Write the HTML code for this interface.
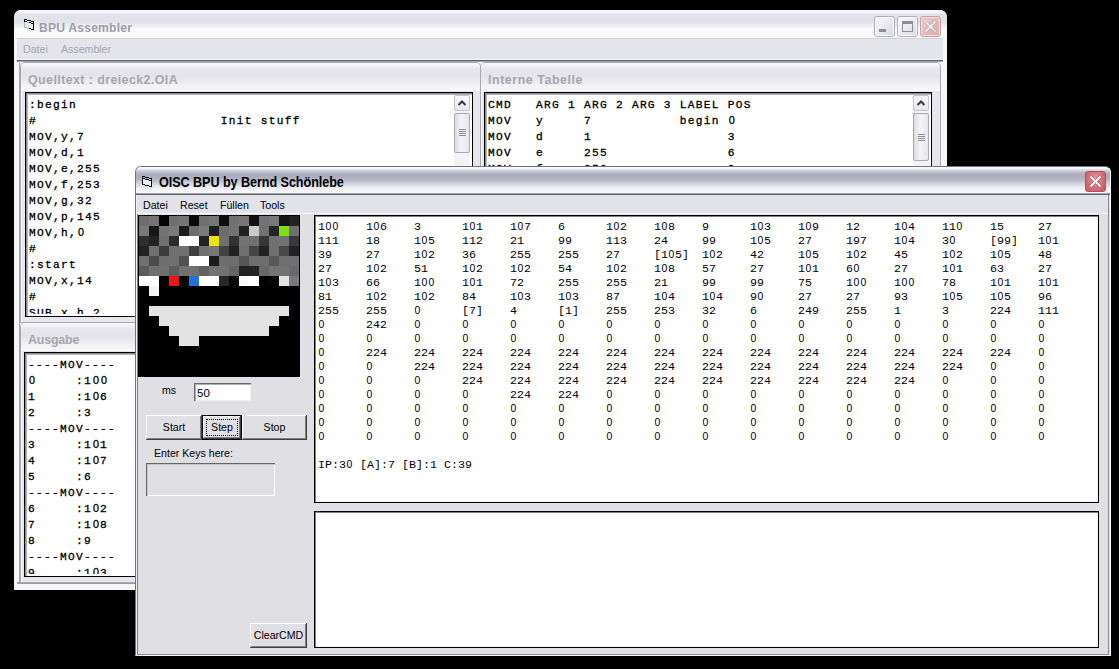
<!DOCTYPE html>
<html><head><meta charset="utf-8"><style>
html,body{margin:0;padding:0}
body{width:1119px;height:669px;background:#000;overflow:hidden;position:relative;font-family:"Liberation Sans",sans-serif}
.a{position:absolute}
.ttl{font-weight:bold;font-size:13.5px;white-space:nowrap;line-height:16px}
.menu{font-size:10.6px;white-space:nowrap;line-height:13px}
.xpbtn{box-sizing:border-box;width:21px;height:21px;border:1px solid #acacb6;border-radius:3px;box-shadow:inset 0 0 0 1px #fbfbfd;background:linear-gradient(135deg,#fafafc,#e8e8ee 55%,#d8d8e0)}
.child{box-sizing:border-box;background:#e6e6ec;border-radius:5px 5px 0 0;overflow:hidden;border:1px solid #a8a8b0;box-shadow:inset 1px 0 0 #fafafc}
.ctitle{left:0;top:0;right:0;height:28px;background:linear-gradient(#fcfcfd 0px,#f4f4f7 2px,#e6e6ec 6px,#e3e3ea 12px,#e8e8ee 17px,#f2f2f5 22px,#f8f8fa 27px)}
.ctext{font-weight:bold;font-size:13.5px;color:#a6a6ad;white-space:nowrap;line-height:16px}
.tb{box-sizing:border-box;background:#fff;border:1px solid #000;box-shadow:inset 1px 1px 0 #8c8c8c,inset 2px 2px 0 #b4b4b4;overflow:hidden}
.src{font-family:"Liberation Mono",monospace;font-size:11.2px;letter-spacing:1.28px;line-height:16px;white-space:pre;color:#000;-webkit-text-stroke:0.3px #000}
.sbb{box-sizing:border-box;border:1px solid #c2c2ca;border-radius:2px;background:linear-gradient(#fafafc,#e6e6ec)}
.sbt{box-sizing:border-box;border:1px solid #a9a9b1;border-radius:2px;background:linear-gradient(90deg,#dcdce2,#f4f4f8 45%,#e6e6ec)}
.grip{left:4px;width:7px;height:1px;background:#8c8c94}
.track{background:#f3f3f5}
#grid i{position:absolute;width:10px;height:10px;display:block}
.btn{box-sizing:border-box;background:#e0dfe3;box-shadow:inset -1px -1px 0 #404040,inset 1px 1px 0 #fff,inset -2px -2px 0 #808080;font-size:10.6px;text-align:center;color:#000}
.ctl{font-size:10.6px;white-space:nowrap;color:#000;line-height:13px}
.mr{position:absolute;left:0;height:14px;width:780px}
.mr b{position:absolute;top:0;font-weight:normal}
#memt{font-family:"Liberation Mono",monospace;font-size:11.67px;line-height:14px;white-space:pre;color:#000;}
#memt u{text-decoration:none;display:inline-block;width:7px;line-height:0;text-align:center;font-family:"Liberation Sans",sans-serif;font-size:10.4px}
.src u{text-decoration:none;display:inline-block;width:8px;line-height:0;letter-spacing:0;text-align:center;font-family:"Liberation Sans",sans-serif;font-size:10.8px}

</style></head><body>
<!-- BACK WINDOW -->
<div class="a" style="left:14px;top:10px;width:933px;height:580px;background:#f6f6f8;border-radius:7px 7px 0 0"></div>
<div class="a" style="left:14px;top:10px;width:933px;height:28px;border-radius:7px 7px 0 0;background:linear-gradient(#f8f8fa 0px,#f5f5f8 3px,#e2e2ea 4px,#e2e2eb 13px,#ececf0 14px,#eeeef2 17px,#f9f9fb 18px,#fafafb 28px)"></div>
<svg class="a" style="left:24px;top:19px" width="10" height="11" shape-rendering="crispEdges"><rect x="1" y="3" width="8" height="7" fill="#e4eeea"/><rect x="3" y="9" width="5" height="1" fill="#e4eeea"/><rect x="0" y="0" width="1" height="1" fill="#111"/><rect x="1" y="0" width="1" height="1" fill="#111"/><rect x="2" y="0" width="1" height="1" fill="#111"/><rect x="0" y="1" width="1" height="1" fill="#111"/><rect x="3" y="1" width="1" height="1" fill="#111"/><rect x="4" y="1" width="1" height="1" fill="#111"/><rect x="5" y="1" width="1" height="1" fill="#111"/><rect x="6" y="1" width="1" height="1" fill="#111"/><rect x="0" y="2" width="1" height="1" fill="#111"/><rect x="1" y="2" width="1" height="1" fill="#111"/><rect x="2" y="2" width="1" height="1" fill="#111"/><rect x="7" y="2" width="1" height="1" fill="#111"/><rect x="8" y="2" width="1" height="1" fill="#111"/><rect x="9" y="2" width="1" height="1" fill="#111"/><rect x="0" y="3" width="1" height="1" fill="#b4b4ba"/><rect x="3" y="3" width="1" height="1" fill="#b4b4ba"/><rect x="4" y="3" width="1" height="1" fill="#b4b4ba"/><rect x="5" y="3" width="1" height="1" fill="#111"/><rect x="6" y="3" width="1" height="1" fill="#111"/><rect x="9" y="3" width="1" height="1" fill="#111"/><rect x="0" y="4" width="1" height="1" fill="#b4b4ba"/><rect x="7" y="4" width="1" height="1" fill="#111"/><rect x="8" y="4" width="1" height="1" fill="#111"/><rect x="9" y="4" width="1" height="1" fill="#111"/><rect x="0" y="5" width="1" height="1" fill="#b4b4ba"/><rect x="9" y="5" width="1" height="1" fill="#111"/><rect x="0" y="6" width="1" height="1" fill="#b4b4ba"/><rect x="9" y="6" width="1" height="1" fill="#111"/><rect x="0" y="7" width="1" height="1" fill="#b4b4ba"/><rect x="9" y="7" width="1" height="1" fill="#111"/><rect x="0" y="8" width="1" height="1" fill="#b4b4ba"/><rect x="1" y="8" width="1" height="1" fill="#b4b4ba"/><rect x="2" y="8" width="1" height="1" fill="#b4b4ba"/><rect x="9" y="8" width="1" height="1" fill="#111"/><rect x="3" y="9" width="1" height="1" fill="#b4b4ba"/><rect x="4" y="9" width="1" height="1" fill="#b4b4ba"/><rect x="5" y="9" width="1" height="1" fill="#111"/><rect x="6" y="9" width="1" height="1" fill="#111"/><rect x="9" y="9" width="1" height="1" fill="#111"/><rect x="7" y="10" width="1" height="1" fill="#111"/><rect x="8" y="10" width="1" height="1" fill="#111"/><rect x="9" y="10" width="1" height="1" fill="#111"/></svg>
<div class="a ttl" style="left:39px;top:20px;color:#9d9da7;letter-spacing:0.2px;transform:scaleX(0.9);transform-origin:0 0">BPU Assembler</div>
<div class="a xpbtn" style="left:874px;top:16px"><div class="a" style="left:4px;top:12px;width:7px;height:3px;background:#8e8e98"></div></div>
<div class="a xpbtn" style="left:897px;top:16px"><div class="a" style="box-sizing:border-box;left:4px;top:4px;width:11px;height:11px;border:1px solid #8e8e98;border-top:3px solid #8e8e98"></div></div>
<div class="a xpbtn" style="left:920px;top:16px;background:linear-gradient(135deg,#ead0d0,#d8aaaa);border-color:#c4a0a4;box-shadow:inset 0 0 0 1px #f2dcdc">
  <svg class="a" style="left:0;top:0" width="19" height="19"><path d="M4.5 4.5L14.5 14.5M14.5 4.5L4.5 14.5" stroke="#a08080" stroke-width="3" opacity="0.6"/><path d="M4.5 4.5L14.5 14.5M14.5 4.5L4.5 14.5" stroke="#fff" stroke-width="1.6"/></svg>
</div>
<div class="a" style="left:17px;top:38px;width:926px;height:22px;background:#e4e4eb;border-top:1px solid #d0d0d6;box-sizing:border-box;border-bottom:1px solid #f6f6f8"></div>
<div class="a menu" style="left:23px;top:43px;color:#a4a4ac">Datei</div>
<div class="a menu" style="left:61px;top:43px;color:#a4a4ac">Assembler</div>
<!-- MDI client -->
<div class="a" style="left:17px;top:60px;width:926px;height:525px;background:#f6f6f8;border-top:1px solid #5e5e64;box-sizing:border-box"></div>
<div class="a" style="left:17px;top:61px;width:926px;height:1px;background:#a4a4aa"></div>
<div class="a" style="left:19px;top:61px;width:1px;height:523px;background:#a6a6ac"></div>
<div class="a" style="left:17px;top:582px;width:926px;height:2px;background:#9c9ca2"></div>

<!-- Quelltext child -->
<div class="a child" style="left:20px;top:62px;width:461px;height:261px">
  <div class="a ctitle"></div>
</div>
<div class="a ctext" style="left:28px;top:72px;letter-spacing:0.45px;transform:scaleX(0.92);transform-origin:0 0">Quelltext : dreieck2.OIA</div>
<div class="a tb" style="left:25px;top:92px;width:448px;height:225px">
  <div class="a" style="left:1px;top:1px;right:1px;bottom:2px;overflow:hidden"><div class="a src" style="left:2px;top:3px">:begin
#                       Init stuff
MOV,y,7
MOV,d,1
MOV,e,255
MOV,f,253
MOV,g,32
MOV,p,145
MOV,h,<u>0</u>
#
:start
MOV,x,14
#
SUB,x,h,2</div></div>
</div>
<div class="a track" style="left:454px;top:95px;width:16px;height:220px"></div>
<div class="a sbb" style="left:454px;top:95px;width:16px;height:16px"><svg class="a" style="left:0;top:0" width="14" height="14"><path d="M3.5 9L7 5.5L10.5 9" fill="none" stroke="#3a3a42" stroke-width="2"/></svg></div>
<div class="a sbt" style="left:454px;top:113px;width:16px;height:40px">
  <div class="a grip" style="top:15px"></div><div class="a grip" style="top:17px"></div><div class="a grip" style="top:19px"></div><div class="a grip" style="top:21px"></div>
</div>

<!-- Interne Tabelle child -->
<div class="a child" style="left:480px;top:62px;width:461px;height:300px">
  <div class="a ctitle"></div>
</div>
<div class="a ctext" style="left:488px;top:72px;letter-spacing:0.6px;transform:scaleX(0.92);transform-origin:0 0">Interne Tabelle</div>
<div class="a tb" style="left:484px;top:92px;width:448px;height:260px">
  <div class="a" style="left:1px;top:1px;right:1px;bottom:2px;overflow:hidden"><div class="a src" style="left:2px;top:3px">CMD   ARG 1 ARG 2 ARG 3 LABEL POS
MOV   y     7           begin <u>0</u>
MOV   d     1                 3
MOV   e     255               6
MOV   f     253               9</div></div>
</div>
<div class="a track" style="left:913px;top:95px;width:16px;height:250px"></div>
<div class="a sbb" style="left:913px;top:95px;width:16px;height:16px"><svg class="a" style="left:0;top:0" width="14" height="14"><path d="M3.5 9L7 5.5L10.5 9" fill="none" stroke="#3a3a42" stroke-width="2"/></svg></div>
<div class="a sbt" style="left:913px;top:113px;width:16px;height:48px">
  <div class="a grip" style="top:20px"></div><div class="a grip" style="top:22px"></div><div class="a grip" style="top:24px"></div><div class="a grip" style="top:26px"></div>
</div>

<!-- Ausgabe child -->
<div class="a child" style="left:20px;top:322px;width:461px;height:261px">
  <div class="a ctitle"></div>
</div>
<div class="a ctext" style="left:28px;top:332px;letter-spacing:-0.2px;transform:scaleX(0.92);transform-origin:0 0">Ausgabe</div>
<div class="a tb" style="left:24px;top:352px;width:448px;height:225px">
  <div class="a" style="left:1px;top:1px;right:1px;bottom:2px;overflow:hidden"><div class="a src" style="left:2px;top:3px">----MOV----
<u>0</u>     :1<u>0</u><u>0</u>
1     :1<u>0</u>6
2     :3
----MOV----
3     :1<u>0</u>1
4     :1<u>0</u>7
5     :6
----MOV----
6     :1<u>0</u>2
7     :1<u>0</u>8
8     :9
----MOV----
9     :1<u>0</u>3</div></div>
</div>

<!-- FRONT WINDOW -->
<div class="a" style="left:135px;top:166px;width:976px;height:490px;background:#e0dfe3;border-radius:6px 6px 0 0;box-sizing:border-box;border:1px solid #74747c;border-right-color:#fff;border-bottom-color:#fff"></div>
<div class="a" style="left:1108px;top:195px;width:1px;height:460px;background:#8a8a90"></div>
<div class="a" style="left:137px;top:654px;width:972px;height:1px;background:#8a8a90"></div>
<div class="a" style="left:137px;top:195px;width:1px;height:460px;background:#808088"></div>
<div class="a" style="left:136px;top:195px;width:1px;height:460px;background:#f0f0f2"></div>
<div class="a" style="left:136px;top:167px;width:974px;height:26px;border-radius:5px 5px 0 0;background:linear-gradient(#fbfbfd 0px,#f6f6f9 1.5px,#d8d9e2 3px,#bfc1ce 5px,#aeb0c0 7px,#acaebe 10px,#b8bac8 13px,#cdcfda 16px,#e2e3ea 19px,#f2f2f6 22px,#f8f8fb 26px)"></div>
<div class="a" style="left:136px;top:193px;width:974px;height:2px;background:linear-gradient(#a4a4ac 50%,#606068 50%)"></div>
<svg class="a" style="left:142px;top:176px" width="10" height="11" shape-rendering="crispEdges"><rect x="1" y="3" width="8" height="7" fill="#eceef4"/><rect x="3" y="9" width="5" height="1" fill="#eceef4"/><rect x="0" y="0" width="1" height="1" fill="#000"/><rect x="1" y="0" width="1" height="1" fill="#000"/><rect x="2" y="0" width="1" height="1" fill="#000"/><rect x="0" y="1" width="1" height="1" fill="#000"/><rect x="3" y="1" width="1" height="1" fill="#000"/><rect x="4" y="1" width="1" height="1" fill="#000"/><rect x="5" y="1" width="1" height="1" fill="#000"/><rect x="6" y="1" width="1" height="1" fill="#000"/><rect x="0" y="2" width="1" height="1" fill="#000"/><rect x="1" y="2" width="1" height="1" fill="#000"/><rect x="2" y="2" width="1" height="1" fill="#000"/><rect x="7" y="2" width="1" height="1" fill="#000"/><rect x="8" y="2" width="1" height="1" fill="#000"/><rect x="9" y="2" width="1" height="1" fill="#000"/><rect x="0" y="3" width="1" height="1" fill="#000"/><rect x="3" y="3" width="1" height="1" fill="#000"/><rect x="4" y="3" width="1" height="1" fill="#000"/><rect x="5" y="3" width="1" height="1" fill="#000"/><rect x="6" y="3" width="1" height="1" fill="#000"/><rect x="9" y="3" width="1" height="1" fill="#000"/><rect x="0" y="4" width="1" height="1" fill="#000"/><rect x="7" y="4" width="1" height="1" fill="#000"/><rect x="8" y="4" width="1" height="1" fill="#000"/><rect x="9" y="4" width="1" height="1" fill="#000"/><rect x="0" y="5" width="1" height="1" fill="#000"/><rect x="9" y="5" width="1" height="1" fill="#000"/><rect x="0" y="6" width="1" height="1" fill="#000"/><rect x="9" y="6" width="1" height="1" fill="#000"/><rect x="0" y="7" width="1" height="1" fill="#000"/><rect x="9" y="7" width="1" height="1" fill="#000"/><rect x="0" y="8" width="1" height="1" fill="#000"/><rect x="1" y="8" width="1" height="1" fill="#000"/><rect x="2" y="8" width="1" height="1" fill="#000"/><rect x="9" y="8" width="1" height="1" fill="#000"/><rect x="3" y="9" width="1" height="1" fill="#000"/><rect x="4" y="9" width="1" height="1" fill="#000"/><rect x="5" y="9" width="1" height="1" fill="#000"/><rect x="6" y="9" width="1" height="1" fill="#000"/><rect x="9" y="9" width="1" height="1" fill="#000"/><rect x="7" y="10" width="1" height="1" fill="#000"/><rect x="8" y="10" width="1" height="1" fill="#000"/><rect x="9" y="10" width="1" height="1" fill="#000"/></svg>
<div class="a ttl" style="left:159px;top:174px;color:#000;font-size:14px;letter-spacing:-0.06px;transform:scaleX(0.9);transform-origin:0 0">OISC BPU by Bernd Schönlebe</div>
<div class="a" style="left:1085px;top:171px;width:21px;height:21px;border-radius:3px;box-sizing:border-box;border:1px solid #b4505c;background:radial-gradient(ellipse at 50% 40%,#e89aa2 0%,#d46c78 60%,#c25866 100%)">
  <svg class="a" style="left:0;top:0" width="19" height="19"><path d="M4.5 4.5L14.5 14.5M14.5 4.5L4.5 14.5" stroke="#7a2a34" stroke-width="3.4" opacity="0.45"/><path d="M4.5 4.5L14.5 14.5M14.5 4.5L4.5 14.5" stroke="#fff" stroke-width="1.9"/></svg>
</div>
<div class="a" style="left:137px;top:195px;width:971px;height:19px;background:#e2e2ea;box-sizing:border-box;border-bottom:1px solid #f8f8fa"></div>
<div class="a menu" style="left:143px;top:199px">Datei</div>
<div class="a menu" style="left:180px;top:199px">Reset</div>
<div class="a menu" style="left:220px;top:199px">Füllen</div>
<div class="a menu" style="left:260px;top:199px">Tools</div>
<div id="grid" class="a" style="left:138px;top:215px;width:162px;height:162px;background:#000"><i style="left:1px;top:1px;background:rgb(110,110,110)"></i><i style="left:11px;top:1px;background:rgb(116,116,116)"></i><i style="left:21px;top:1px;background:rgb(5,5,5)"></i><i style="left:31px;top:1px;background:rgb(111,111,111)"></i><i style="left:41px;top:1px;background:rgb(117,117,117)"></i><i style="left:51px;top:1px;background:rgb(9,9,9)"></i><i style="left:61px;top:1px;background:rgb(112,112,112)"></i><i style="left:71px;top:1px;background:rgb(118,118,118)"></i><i style="left:81px;top:1px;background:rgb(13,13,13)"></i><i style="left:91px;top:1px;background:rgb(113,113,113)"></i><i style="left:101px;top:1px;background:rgb(119,119,119)"></i><i style="left:111px;top:1px;background:rgb(16,16,16)"></i><i style="left:121px;top:1px;background:rgb(114,114,114)"></i><i style="left:131px;top:1px;background:rgb(120,120,120)"></i><i style="left:141px;top:1px;background:rgb(20,20,20)"></i><i style="left:151px;top:1px;background:rgb(34,34,34)"></i><i style="left:1px;top:11px;background:rgb(121,121,121)"></i><i style="left:11px;top:11px;background:rgb(23,23,23)"></i><i style="left:21px;top:11px;background:rgb(115,115,115)"></i><i style="left:31px;top:11px;background:rgb(122,122,122)"></i><i style="left:41px;top:11px;background:rgb(27,27,27)"></i><i style="left:51px;top:11px;background:rgb(109,109,109)"></i><i style="left:61px;top:11px;background:rgb(123,123,123)"></i><i style="left:71px;top:11px;background:rgb(30,30,30)"></i><i style="left:81px;top:11px;background:rgb(109,109,109)"></i><i style="left:91px;top:11px;background:rgb(115,115,115)"></i><i style="left:101px;top:11px;background:rgb(34,34,34)"></i><i style="left:111px;top:11px;background:rgb(202,202,202)"></i><i style="left:121px;top:11px;background:rgb(114,114,114)"></i><i style="left:131px;top:11px;background:rgb(37,37,37)"></i><i style="left:141px;top:11px;background:#7ee014"></i><i style="left:151px;top:11px;background:rgb(111,111,111)"></i><i style="left:1px;top:21px;background:rgb(47,47,47)"></i><i style="left:11px;top:21px;background:rgb(34,34,34)"></i><i style="left:21px;top:21px;background:rgb(112,112,112)"></i><i style="left:31px;top:21px;background:rgb(44,44,44)"></i><i style="left:41px;top:21px;background:rgb(255,255,255)"></i><i style="left:51px;top:21px;background:rgb(255,255,255)"></i><i style="left:61px;top:21px;background:rgb(34,34,34)"></i><i style="left:71px;top:21px;background:#f0e010"></i><i style="left:81px;top:21px;background:rgb(112,112,112)"></i><i style="left:91px;top:21px;background:rgb(50,50,50)"></i><i style="left:101px;top:21px;background:rgb(115,115,115)"></i><i style="left:111px;top:21px;background:rgb(112,112,112)"></i><i style="left:121px;top:21px;background:rgb(54,54,54)"></i><i style="left:131px;top:21px;background:rgb(112,112,112)"></i><i style="left:141px;top:21px;background:rgb(115,115,115)"></i><i style="left:151px;top:21px;background:rgb(57,57,57)"></i><i style="left:1px;top:31px;background:rgb(34,34,34)"></i><i style="left:11px;top:31px;background:rgb(112,112,112)"></i><i style="left:21px;top:31px;background:rgb(60,60,60)"></i><i style="left:31px;top:31px;background:rgb(112,112,112)"></i><i style="left:41px;top:31px;background:rgb(112,112,112)"></i><i style="left:51px;top:31px;background:rgb(63,63,63)"></i><i style="left:61px;top:31px;background:rgb(112,112,112)"></i><i style="left:71px;top:31px;background:rgb(118,118,118)"></i><i style="left:81px;top:31px;background:rgb(66,66,66)"></i><i style="left:91px;top:31px;background:rgb(34,34,34)"></i><i style="left:101px;top:31px;background:rgb(111,111,111)"></i><i style="left:111px;top:31px;background:rgb(69,69,69)"></i><i style="left:121px;top:31px;background:rgb(34,34,34)"></i><i style="left:131px;top:31px;background:rgb(111,111,111)"></i><i style="left:141px;top:31px;background:rgb(72,72,72)"></i><i style="left:151px;top:31px;background:rgb(34,34,34)"></i><i style="left:1px;top:41px;background:rgb(113,113,113)"></i><i style="left:11px;top:41px;background:rgb(76,76,76)"></i><i style="left:21px;top:41px;background:rgb(110,110,110)"></i><i style="left:31px;top:41px;background:rgb(111,111,111)"></i><i style="left:41px;top:41px;background:rgb(82,82,82)"></i><i style="left:51px;top:41px;background:rgb(255,255,255)"></i><i style="left:61px;top:41px;background:rgb(255,255,255)"></i><i style="left:71px;top:41px;background:rgb(27,27,27)"></i><i style="left:81px;top:41px;background:rgb(109,109,109)"></i><i style="left:91px;top:41px;background:rgb(109,109,109)"></i><i style="left:101px;top:41px;background:rgb(85,85,85)"></i><i style="left:111px;top:41px;background:rgb(110,110,110)"></i><i style="left:121px;top:41px;background:rgb(110,110,110)"></i><i style="left:131px;top:41px;background:rgb(88,88,88)"></i><i style="left:141px;top:41px;background:rgb(111,111,111)"></i><i style="left:151px;top:41px;background:rgb(111,111,111)"></i><i style="left:1px;top:51px;background:rgb(91,91,91)"></i><i style="left:11px;top:51px;background:rgb(112,112,112)"></i><i style="left:21px;top:51px;background:rgb(112,112,112)"></i><i style="left:31px;top:51px;background:rgb(94,94,94)"></i><i style="left:41px;top:51px;background:rgb(113,113,113)"></i><i style="left:51px;top:51px;background:rgb(113,113,113)"></i><i style="left:61px;top:51px;background:rgb(97,97,97)"></i><i style="left:71px;top:51px;background:rgb(114,114,114)"></i><i style="left:81px;top:51px;background:rgb(114,114,114)"></i><i style="left:91px;top:51px;background:rgb(100,100,100)"></i><i style="left:101px;top:51px;background:rgb(34,34,34)"></i><i style="left:111px;top:51px;background:rgb(34,34,34)"></i><i style="left:121px;top:51px;background:rgb(103,103,103)"></i><i style="left:131px;top:51px;background:rgb(115,115,115)"></i><i style="left:141px;top:51px;background:rgb(115,115,115)"></i><i style="left:151px;top:51px;background:rgb(106,106,106)"></i><i style="left:1px;top:61px;background:rgb(255,255,255)"></i><i style="left:11px;top:61px;background:rgb(255,255,255)"></i><i style="left:31px;top:61px;background:#e81818"></i><i style="left:41px;top:61px;background:rgb(6,6,6)"></i><i style="left:51px;top:61px;background:#2070e0"></i><i style="left:61px;top:61px;background:rgb(255,255,255)"></i><i style="left:71px;top:61px;background:rgb(253,253,253)"></i><i style="left:81px;top:61px;background:rgb(39,39,39)"></i><i style="left:91px;top:61px;background:rgb(9,9,9)"></i><i style="left:101px;top:61px;background:rgb(250,250,250)"></i><i style="left:111px;top:61px;background:rgb(255,255,255)"></i><i style="left:121px;top:61px;background:rgb(2,2,2)"></i><i style="left:131px;top:61px;background:rgb(5,5,5)"></i><i style="left:141px;top:61px;background:rgb(227,227,227)"></i><i style="left:151px;top:61px;background:rgb(121,121,121)"></i><i style="left:11px;top:71px;background:rgb(243,243,243)"></i><i style="left:11px;top:91px;background:rgb(227,227,227)"></i><i style="left:21px;top:91px;background:rgb(227,227,227)"></i><i style="left:31px;top:91px;background:rgb(227,227,227)"></i><i style="left:41px;top:91px;background:rgb(227,227,227)"></i><i style="left:51px;top:91px;background:rgb(227,227,227)"></i><i style="left:61px;top:91px;background:rgb(227,227,227)"></i><i style="left:71px;top:91px;background:rgb(227,227,227)"></i><i style="left:81px;top:91px;background:rgb(227,227,227)"></i><i style="left:91px;top:91px;background:rgb(227,227,227)"></i><i style="left:101px;top:91px;background:rgb(227,227,227)"></i><i style="left:111px;top:91px;background:rgb(227,227,227)"></i><i style="left:121px;top:91px;background:rgb(227,227,227)"></i><i style="left:131px;top:91px;background:rgb(227,227,227)"></i><i style="left:141px;top:91px;background:rgb(227,227,227)"></i><i style="left:21px;top:101px;background:rgb(227,227,227)"></i><i style="left:31px;top:101px;background:rgb(227,227,227)"></i><i style="left:41px;top:101px;background:rgb(227,227,227)"></i><i style="left:51px;top:101px;background:rgb(227,227,227)"></i><i style="left:61px;top:101px;background:rgb(227,227,227)"></i><i style="left:71px;top:101px;background:rgb(227,227,227)"></i><i style="left:81px;top:101px;background:rgb(227,227,227)"></i><i style="left:91px;top:101px;background:rgb(227,227,227)"></i><i style="left:101px;top:101px;background:rgb(227,227,227)"></i><i style="left:111px;top:101px;background:rgb(227,227,227)"></i><i style="left:121px;top:101px;background:rgb(227,227,227)"></i><i style="left:131px;top:101px;background:rgb(227,227,227)"></i><i style="left:31px;top:111px;background:rgb(227,227,227)"></i><i style="left:41px;top:111px;background:rgb(227,227,227)"></i><i style="left:51px;top:111px;background:rgb(227,227,227)"></i><i style="left:61px;top:111px;background:rgb(227,227,227)"></i><i style="left:71px;top:111px;background:rgb(227,227,227)"></i><i style="left:81px;top:111px;background:rgb(227,227,227)"></i><i style="left:91px;top:111px;background:rgb(227,227,227)"></i><i style="left:101px;top:111px;background:rgb(227,227,227)"></i><i style="left:111px;top:111px;background:rgb(227,227,227)"></i><i style="left:121px;top:111px;background:rgb(227,227,227)"></i><i style="left:41px;top:121px;background:rgb(227,227,227)"></i><i style="left:51px;top:121px;background:rgb(227,227,227)"></i></div>
<div class="a ctl" style="left:162px;top:384px">ms</div>
<div class="a" style="left:194px;top:383px;width:57px;height:18px;background:#fff;box-shadow:inset 1px 1px 0 #6a6a6a,inset 2px 2px 0 #b0b0b0,inset -1px -1px 0 #f0f0f0"></div>
<div class="a ctl" style="left:197px;top:387px;font-size:11.5px">50</div>
<div class="a btn" style="left:146px;top:415px;width:56px;height:25px;line-height:24px">Start</div>
<div class="a btn" style="left:202px;top:415px;width:40px;height:25px;line-height:24px;box-shadow:inset 0 0 0 1px #000,inset -2px -2px 0 #404040,inset 2px 2px 0 #fff,inset -3px -3px 0 #808080">Step</div>
<div class="a" style="left:206px;top:419px;width:32px;height:17px;border:1px dotted #000;box-sizing:border-box"></div>
<div class="a btn" style="left:242px;top:415px;width:65px;height:25px;line-height:24px">Stop</div>
<div class="a ctl" style="left:154px;top:447px">Enter Keys here:</div>
<div class="a" style="left:146px;top:463px;width:129px;height:33px;background:#e0dfe3;box-shadow:inset 1px 1px 0 #686868,inset 2px 2px 0 #c8c8cc,inset -1px -1px 0 #fff"></div>
<div class="a btn" style="left:250px;top:623px;width:57px;height:25px;line-height:24px">ClearCMD</div>
<div class="a tb" style="left:314px;top:215px;width:785px;height:288px;box-shadow:inset 1px 1px 0 #808080,inset -1px -1px 0 #f0f0f0">
  <div id="memt" class="a" style="left:3px;top:4px"><div class="mr" style="top:0px"><b style="left:0px">1<u>0</u><u>0</u></b><b style="left:48px">1<u>0</u>6</b><b style="left:96px">3</b><b style="left:144px">1<u>0</u>1</b><b style="left:192px">1<u>0</u>7</b><b style="left:240px">6</b><b style="left:288px">1<u>0</u>2</b><b style="left:336px">1<u>0</u>8</b><b style="left:384px">9</b><b style="left:432px">1<u>0</u>3</b><b style="left:480px">1<u>0</u>9</b><b style="left:528px">12</b><b style="left:576px">1<u>0</u>4</b><b style="left:624px">11<u>0</u></b><b style="left:672px">15</b><b style="left:720px">27</b></div><div class="mr" style="top:14px"><b style="left:0px">111</b><b style="left:48px">18</b><b style="left:96px">1<u>0</u>5</b><b style="left:144px">112</b><b style="left:192px">21</b><b style="left:240px">99</b><b style="left:288px">113</b><b style="left:336px">24</b><b style="left:384px">99</b><b style="left:432px">1<u>0</u>5</b><b style="left:480px">27</b><b style="left:528px">197</b><b style="left:576px">1<u>0</u>4</b><b style="left:624px">3<u>0</u></b><b style="left:672px">[99]</b><b style="left:720px">1<u>0</u>1</b></div><div class="mr" style="top:28px"><b style="left:0px">39</b><b style="left:48px">27</b><b style="left:96px">1<u>0</u>2</b><b style="left:144px">36</b><b style="left:192px">255</b><b style="left:240px">255</b><b style="left:288px">27</b><b style="left:336px">[1<u>0</u>5]</b><b style="left:384px">1<u>0</u>2</b><b style="left:432px">42</b><b style="left:480px">1<u>0</u>5</b><b style="left:528px">1<u>0</u>2</b><b style="left:576px">45</b><b style="left:624px">1<u>0</u>2</b><b style="left:672px">1<u>0</u>5</b><b style="left:720px">48</b></div><div class="mr" style="top:42px"><b style="left:0px">27</b><b style="left:48px">1<u>0</u>2</b><b style="left:96px">51</b><b style="left:144px">1<u>0</u>2</b><b style="left:192px">1<u>0</u>2</b><b style="left:240px">54</b><b style="left:288px">1<u>0</u>2</b><b style="left:336px">1<u>0</u>8</b><b style="left:384px">57</b><b style="left:432px">27</b><b style="left:480px">1<u>0</u>1</b><b style="left:528px">6<u>0</u></b><b style="left:576px">27</b><b style="left:624px">1<u>0</u>1</b><b style="left:672px">63</b><b style="left:720px">27</b></div><div class="mr" style="top:56px"><b style="left:0px">1<u>0</u>3</b><b style="left:48px">66</b><b style="left:96px">1<u>0</u><u>0</u></b><b style="left:144px">1<u>0</u>1</b><b style="left:192px">72</b><b style="left:240px">255</b><b style="left:288px">255</b><b style="left:336px">21</b><b style="left:384px">99</b><b style="left:432px">99</b><b style="left:480px">75</b><b style="left:528px">1<u>0</u><u>0</u></b><b style="left:576px">1<u>0</u><u>0</u></b><b style="left:624px">78</b><b style="left:672px">1<u>0</u>1</b><b style="left:720px">1<u>0</u>1</b></div><div class="mr" style="top:70px"><b style="left:0px">81</b><b style="left:48px">1<u>0</u>2</b><b style="left:96px">1<u>0</u>2</b><b style="left:144px">84</b><b style="left:192px">1<u>0</u>3</b><b style="left:240px">1<u>0</u>3</b><b style="left:288px">87</b><b style="left:336px">1<u>0</u>4</b><b style="left:384px">1<u>0</u>4</b><b style="left:432px">9<u>0</u></b><b style="left:480px">27</b><b style="left:528px">27</b><b style="left:576px">93</b><b style="left:624px">1<u>0</u>5</b><b style="left:672px">1<u>0</u>5</b><b style="left:720px">96</b></div><div class="mr" style="top:84px"><b style="left:0px">255</b><b style="left:48px">255</b><b style="left:96px"><u>0</u></b><b style="left:144px">[7]</b><b style="left:192px">4</b><b style="left:240px">[1]</b><b style="left:288px">255</b><b style="left:336px">253</b><b style="left:384px">32</b><b style="left:432px">6</b><b style="left:480px">249</b><b style="left:528px">255</b><b style="left:576px">1</b><b style="left:624px">3</b><b style="left:672px">224</b><b style="left:720px">111</b></div><div class="mr" style="top:98px"><b style="left:0px"><u>0</u></b><b style="left:48px">242</b><b style="left:96px"><u>0</u></b><b style="left:144px"><u>0</u></b><b style="left:192px"><u>0</u></b><b style="left:240px"><u>0</u></b><b style="left:288px"><u>0</u></b><b style="left:336px"><u>0</u></b><b style="left:384px"><u>0</u></b><b style="left:432px"><u>0</u></b><b style="left:480px"><u>0</u></b><b style="left:528px"><u>0</u></b><b style="left:576px"><u>0</u></b><b style="left:624px"><u>0</u></b><b style="left:672px"><u>0</u></b><b style="left:720px"><u>0</u></b></div><div class="mr" style="top:112px"><b style="left:0px"><u>0</u></b><b style="left:48px"><u>0</u></b><b style="left:96px"><u>0</u></b><b style="left:144px"><u>0</u></b><b style="left:192px"><u>0</u></b><b style="left:240px"><u>0</u></b><b style="left:288px"><u>0</u></b><b style="left:336px"><u>0</u></b><b style="left:384px"><u>0</u></b><b style="left:432px"><u>0</u></b><b style="left:480px"><u>0</u></b><b style="left:528px"><u>0</u></b><b style="left:576px"><u>0</u></b><b style="left:624px"><u>0</u></b><b style="left:672px"><u>0</u></b><b style="left:720px"><u>0</u></b></div><div class="mr" style="top:126px"><b style="left:0px"><u>0</u></b><b style="left:48px">224</b><b style="left:96px">224</b><b style="left:144px">224</b><b style="left:192px">224</b><b style="left:240px">224</b><b style="left:288px">224</b><b style="left:336px">224</b><b style="left:384px">224</b><b style="left:432px">224</b><b style="left:480px">224</b><b style="left:528px">224</b><b style="left:576px">224</b><b style="left:624px">224</b><b style="left:672px">224</b><b style="left:720px"><u>0</u></b></div><div class="mr" style="top:140px"><b style="left:0px"><u>0</u></b><b style="left:48px"><u>0</u></b><b style="left:96px">224</b><b style="left:144px">224</b><b style="left:192px">224</b><b style="left:240px">224</b><b style="left:288px">224</b><b style="left:336px">224</b><b style="left:384px">224</b><b style="left:432px">224</b><b style="left:480px">224</b><b style="left:528px">224</b><b style="left:576px">224</b><b style="left:624px">224</b><b style="left:672px"><u>0</u></b><b style="left:720px"><u>0</u></b></div><div class="mr" style="top:154px"><b style="left:0px"><u>0</u></b><b style="left:48px"><u>0</u></b><b style="left:96px"><u>0</u></b><b style="left:144px">224</b><b style="left:192px">224</b><b style="left:240px">224</b><b style="left:288px">224</b><b style="left:336px">224</b><b style="left:384px">224</b><b style="left:432px">224</b><b style="left:480px">224</b><b style="left:528px">224</b><b style="left:576px">224</b><b style="left:624px"><u>0</u></b><b style="left:672px"><u>0</u></b><b style="left:720px"><u>0</u></b></div><div class="mr" style="top:168px"><b style="left:0px"><u>0</u></b><b style="left:48px"><u>0</u></b><b style="left:96px"><u>0</u></b><b style="left:144px"><u>0</u></b><b style="left:192px">224</b><b style="left:240px">224</b><b style="left:288px"><u>0</u></b><b style="left:336px"><u>0</u></b><b style="left:384px"><u>0</u></b><b style="left:432px"><u>0</u></b><b style="left:480px"><u>0</u></b><b style="left:528px"><u>0</u></b><b style="left:576px"><u>0</u></b><b style="left:624px"><u>0</u></b><b style="left:672px"><u>0</u></b><b style="left:720px"><u>0</u></b></div><div class="mr" style="top:182px"><b style="left:0px"><u>0</u></b><b style="left:48px"><u>0</u></b><b style="left:96px"><u>0</u></b><b style="left:144px"><u>0</u></b><b style="left:192px"><u>0</u></b><b style="left:240px"><u>0</u></b><b style="left:288px"><u>0</u></b><b style="left:336px"><u>0</u></b><b style="left:384px"><u>0</u></b><b style="left:432px"><u>0</u></b><b style="left:480px"><u>0</u></b><b style="left:528px"><u>0</u></b><b style="left:576px"><u>0</u></b><b style="left:624px"><u>0</u></b><b style="left:672px"><u>0</u></b><b style="left:720px"><u>0</u></b></div><div class="mr" style="top:196px"><b style="left:0px"><u>0</u></b><b style="left:48px"><u>0</u></b><b style="left:96px"><u>0</u></b><b style="left:144px"><u>0</u></b><b style="left:192px"><u>0</u></b><b style="left:240px"><u>0</u></b><b style="left:288px"><u>0</u></b><b style="left:336px"><u>0</u></b><b style="left:384px"><u>0</u></b><b style="left:432px"><u>0</u></b><b style="left:480px"><u>0</u></b><b style="left:528px"><u>0</u></b><b style="left:576px"><u>0</u></b><b style="left:624px"><u>0</u></b><b style="left:672px"><u>0</u></b><b style="left:720px"><u>0</u></b></div><div class="mr" style="top:210px"><b style="left:0px"><u>0</u></b><b style="left:48px"><u>0</u></b><b style="left:96px"><u>0</u></b><b style="left:144px"><u>0</u></b><b style="left:192px"><u>0</u></b><b style="left:240px"><u>0</u></b><b style="left:288px"><u>0</u></b><b style="left:336px"><u>0</u></b><b style="left:384px"><u>0</u></b><b style="left:432px"><u>0</u></b><b style="left:480px"><u>0</u></b><b style="left:528px"><u>0</u></b><b style="left:576px"><u>0</u></b><b style="left:624px"><u>0</u></b><b style="left:672px"><u>0</u></b><b style="left:720px"><u>0</u></b></div><div class="a" style="top:238px;left:0">IP:3<u>0</u> [A]:7 [B]:1 C:39</div></div>
</div>
<div class="a tb" style="left:314px;top:511px;width:785px;height:137px;box-shadow:inset 1px 1px 0 #808080,inset -1px -1px 0 #f0f0f0"></div>

</body></html>
